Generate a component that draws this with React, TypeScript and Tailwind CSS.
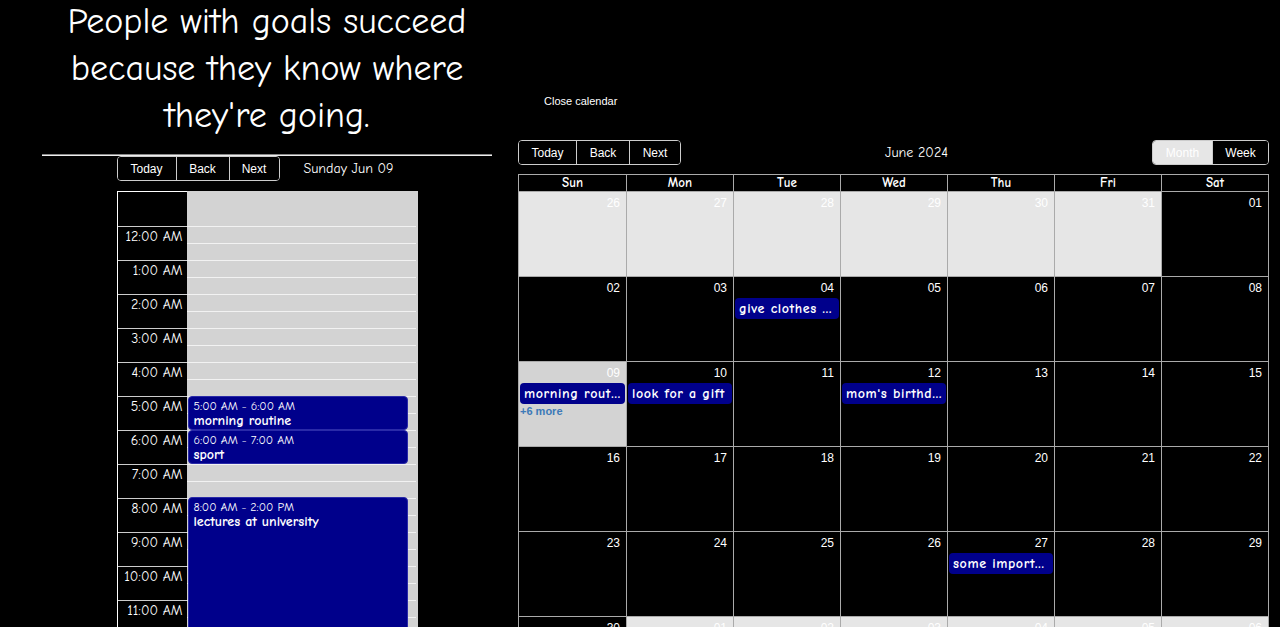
const comic = "font-['Comic_Sans_MS','Comic_Neue','Open_Sans',sans-serif]";
const arial = "font-['Liberation_Sans',Arial,sans-serif]";

function BtnGroup({ items, widths, active }: { items: string[]; widths: string[]; active?: string }) {
  return (
    <div className={`flex h-[25px] border border-[#ccc] rounded-[4px] overflow-hidden ${arial}`}>
      {items.map((t, i) => (
        <button
          key={t}
          className={`${widths[i]} h-full text-[12px] ${i > 0 ? "border-l border-[#ccc]" : ""} ${
            active === t ? "bg-[#e6e6e6] text-white" : "bg-black text-white"
          }`}
        >
          {t}
        </button>
      ))}
    </div>
  );
}

const hours = [
  "12:00 AM", "1:00 AM", "2:00 AM", "3:00 AM", "4:00 AM", "5:00 AM", "6:00 AM", "7:00 AM",
  "8:00 AM", "9:00 AM", "10:00 AM", "11:00 AM", "12:00 PM", "1:00 PM",
];

const dayEvents = [
  { top: 205, height: 34, time: "5:00 AM - 6:00 AM", title: "morning routine" },
  { top: 239, height: 34, time: "6:00 AM - 7:00 AM", title: "sport" },
  { top: 306, height: 204, time: "8:00 AM - 2:00 PM", title: "lectures at university" },
];

function DayView() {
  return (
    <div className="w-[301px] mx-auto mt-[9px] flex">
      <div className="w-[70px] border-l border-t border-white bg-black">
        <div className="h-[34px]" />
        {hours.map((h) => (
          <div key={h} className={`h-[34px] border-t border-[#ccc] text-right pr-[4px] text-[14px] leading-[20px] font-medium text-white ${comic}`}>
            {h}
          </div>
        ))}
      </div>
      <div className="relative flex-1 bg-[#d3d3d3] pr-[2px]">
        <div className="h-[35px]" />
        {Array.from({ length: 28 }).map((_, i) => (
          <div key={i} className="h-[17px] border-t border-[#f2f2f2]" />
        ))}
        {dayEvents.map((e) => (
          <div
            key={e.title}
            className={`absolute left-[1px] w-[220px] rounded-[4px] bg-[#00008b] border border-[#2a2aa8] px-[5px] pt-[2px] text-white ${comic}`}
            style={{ top: e.top, height: e.height }}
          >
            <div className="text-[12px] leading-[14px] font-medium">{e.time}</div>
            <div className="text-[14px] leading-[16px] font-semibold">{e.title}</div>
          </div>
        ))}
      </div>
    </div>
  );
}

type Cell = { d: string; off?: boolean; today?: boolean; ev?: string; more?: string };

const weeks: Cell[][] = [
  [
    { d: "26", off: true }, { d: "27", off: true }, { d: "28", off: true }, { d: "29", off: true },
    { d: "30", off: true }, { d: "31", off: true }, { d: "01" },
  ],
  [{ d: "02" }, { d: "03" }, { d: "04", ev: "give clothes to charity" }, { d: "05" }, { d: "06" }, { d: "07" }, { d: "08" }],
  [
    { d: "09", today: true, ev: "morning routine", more: "+6 more" },
    { d: "10", ev: "look for a gift" }, { d: "11" }, { d: "12", ev: "mom's birthday" },
    { d: "13" }, { d: "14" }, { d: "15" },
  ],
  [{ d: "16" }, { d: "17" }, { d: "18" }, { d: "19" }, { d: "20" }, { d: "21" }, { d: "22" }],
  [{ d: "23" }, { d: "24" }, { d: "25" }, { d: "26" }, { d: "27", ev: "some important meeting" }, { d: "28" }, { d: "29" }],
  [
    { d: "30" }, { d: "01", off: true }, { d: "02", off: true }, { d: "03", off: true },
    { d: "04", off: true }, { d: "05", off: true }, { d: "06", off: true },
  ],
];

function MonthView() {
  return (
    <div className="mt-[9px] border border-[#aaa]">
      <div className="grid grid-cols-7 h-[16px]">
        {["Sun", "Mon", "Tue", "Wed", "Thu", "Fri", "Sat"].map((d, i) => (
          <div key={d} className={`text-center text-[13px] leading-[16px] font-bold text-white ${comic} ${i > 0 ? "border-l border-[#aaa]" : ""}`}>
            {d}
          </div>
        ))}
      </div>
      {weeks.map((w, wi) => (
        <div key={wi} className="grid grid-cols-7 h-[85px] border-t border-[#aaa]">
          {w.map((c, i) => (
            <div
              key={i}
              className={`min-w-0 ${i > 0 ? "border-l border-[#aaa]" : ""} ${
                c.today ? "bg-[#d3d3d3]" : c.off ? "bg-[#e6e6e6]" : "bg-black"
              }`}
            >
              <div className={`h-[21px] pt-[4px] pr-[6px] text-right text-[12px] leading-[14px] text-white ${arial}`}>{c.d}</div>
              {c.ev && (
                <div className={`mx-[1px] h-[21px] rounded-[4px] bg-[#00008b] px-[4px] text-[14px] leading-[21px] font-semibold tracking-[0.6px] text-white truncate ${comic}`}>
                  {c.ev}
                </div>
              )}
              {c.more && (
                <div className={`px-[1px] text-[11px] leading-[14px] font-bold text-[#3d7ab8] ${arial}`}>{c.more}</div>
              )}
            </div>
          ))}
        </div>
      ))}
    </div>
  );
}

export default function App() {
  return (
    <div className="h-[627px] overflow-hidden bg-black flex">
      <div className="w-[492px] pl-[42px] shrink-0">
        <h1 className={`mt-[-2px] text-center text-[36px] leading-[47px] font-medium text-white ${comic}`}>
          People with goals succeed because they know where they're going.
        </h1>
        <div className="mt-[15px] border-t border-[#888] border-b border-b-[#eee]" />
        <div className="w-[301px] mx-auto flex items-center">
          <BtnGroup items={["Today", "Back", "Next"]} widths={["w-[58px]", "w-[53px]", "w-[50px]"]} />
          <div className={`flex-1 text-center text-[14px] font-medium text-white ${comic}`}>Sunday Jun 09</div>
        </div>
        <div className="pt-[1px]">
          <DayView />
        </div>
      </div>
      <div className="ml-[26px] w-[751px] shrink-0 pt-[95px]">
        <button className={`block ml-[26px] text-[11px] leading-[13px] text-white ${arial}`}>Close calendar</button>
        <div className="mt-[32px] flex items-center">
          <BtnGroup items={["Today", "Back", "Next"]} widths={["w-[57px]", "w-[53px]", "w-[51px]"]} />
          <div className={`flex-1 text-center text-[14px] font-medium text-white ${comic}`}>June 2024</div>
          <BtnGroup items={["Month", "Week"]} widths={["w-[59px]", "w-[56px]"]} active="Month" />
        </div>
        <MonthView />
      </div>
    </div>
  );
}
